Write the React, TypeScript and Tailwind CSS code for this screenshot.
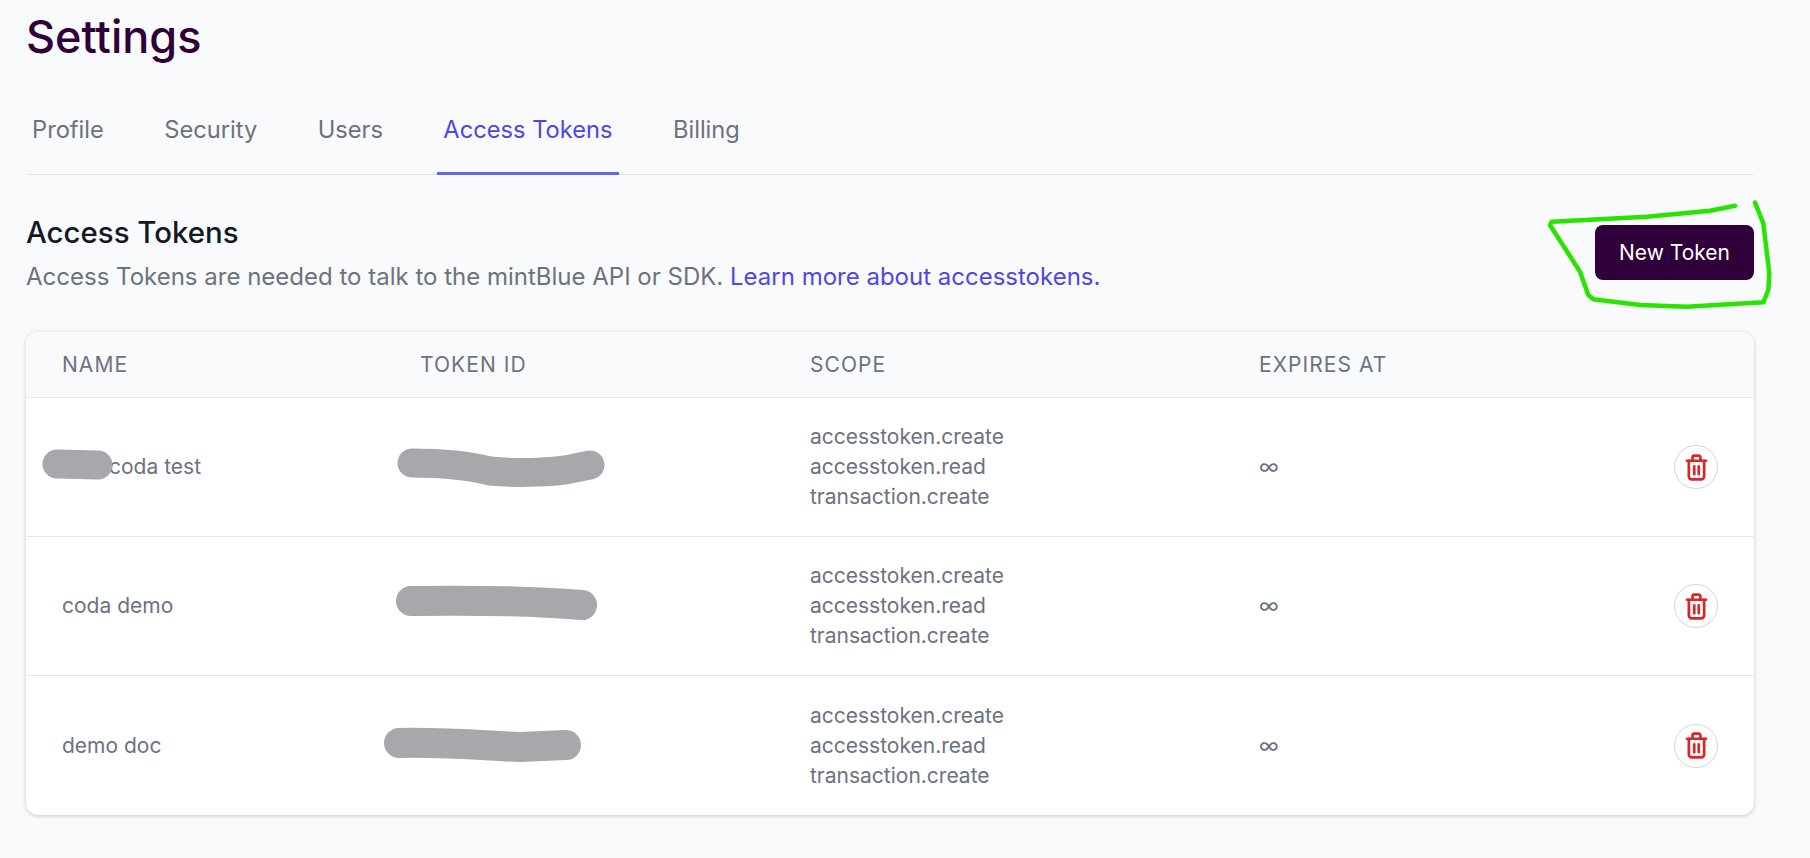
import React from "react";

const tabs = ["Profile", "Security", "Users", "Access Tokens", "Billing"];
const rows = ["coda test", "coda demo", "demo doc"];
const cols = "grid grid-cols-[358px_390px_449px_1fr_auto] items-center";

function Trash() {
  return (
    <svg width="27" height="27" viewBox="0 0 24 24" fill="none" stroke="#dc2626" strokeWidth="2.4" strokeLinecap="round" strokeLinejoin="round">
      <path d="M3.500 6h17" />
      <path d="M18.800 6v14a2.500 2.500 0 0 1-2.500 2.500H7.700a2.500 2.500 0 0 1-2.500-2.500V6" />
      <path d="M8.500 6V3a1.500 1.500 0 0 1 1.500-1.500h4A1.500 1.500 0 0 1 15.500 3v3" />
      <path d="M10 11v7" />
      <path d="M14 11v7" />
    </svg>
  );
}

function Scribbles() {
  return (
    <svg className="absolute left-0 top-0 pointer-events-none" width="1810" height="858" fill="none" strokeLinecap="round" strokeLinejoin="round">
      <path d="M57 464 L98 465" stroke="#a7a8ab" strokeWidth="29" />
      <path d="M412 463 C450 463 470 466 490 471 C520 474 560 472 575 468 L590 465" stroke="#a7a8ab" strokeWidth="29" />
      <path d="M411 601 C470 600 530 601 582 605" stroke="#a7a8ab" strokeWidth="30" />
      <path d="M399 743 C450 742 490 746 520 747 L566 745" stroke="#a7a8ab" strokeWidth="30" />
      <path d="M1735 205.700 L1710 210.700 L1646.700 216.700 L1551.700 221.700 L1550 225 L1580 271.700 L1588.300 295 L1593.300 299.300 L1640 305 L1686.700 306.700 L1763.300 302.300 L1768.300 290 L1769.300 273.300 L1763.300 223.300 L1755 202.700" stroke="#29e300" strokeWidth="4.500" />
    </svg>
  );
}

export default function App() {
  return (
    <div className="relative h-[858px] overflow-hidden bg-[#f9fafb] pl-[26px] pr-[56px] font-['Inter',sans-serif] text-[#6b7280]">
      <h1 className="pt-[8px] text-[45px] leading-[58px] font-medium text-[#2f0039]">Settings</h1>
      <div className="mt-[41px] flex h-[68px] gap-[48.3px] border-b border-[#e5e7eb]">
        {tabs.map((t) => (
          <div key={t} className={t === "Access Tokens" ? "h-[68px] border-b-[3px] border-[#6366f1] px-[6px] pt-[5px] text-[23.7px] leading-[36px] text-[#4f46e5]" : "h-[68px] border-b-[3px] border-transparent px-[6px] pt-[5px] text-[23.7px] leading-[36px]"}>
            {t}
          </div>
        ))}
      </div>
      <div className="mt-[38px] flex items-start justify-between">
        <div>
          <h2 className="text-[29.4px] leading-[40px] font-medium text-[#111827]">Access Tokens</h2>
          <p className="mt-[6px] text-[24px] leading-[36px]">
            Access Tokens are needed to talk to the mintBlue API or SDK. <span className="text-[#4f46e5]">Learn more about accesstokens.</span>
          </p>
        </div>
        <button className="mt-[12px] h-[55px] w-[159px] rounded-lg bg-[#2f0039] text-[21px] text-white">New Token</button>
      </div>
      <div className="mt-[37px] overflow-hidden rounded-xl bg-white shadow-[0_1px_4px_rgba(0,0,0,0.2)]">
        <div className={`${cols} h-[66px] border-b border-[#e5e7eb] bg-[#f9fafb] pl-[36px] text-[21px] tracking-wider`}>
          <div>NAME</div>
          <div>TOKEN ID</div>
          <div>SCOPE</div>
          <div>EXPIRES AT</div>
          <div />
        </div>
        {rows.map((r, i) => (
          <div key={r} className={`${cols} h-[139px] pl-[36px] text-[21px] leading-[30px] ${i < 2 ? "border-b border-[#e5e7eb]" : ""}`}>
            <div className={i === 0 ? "pl-[47px]" : ""}>{r}</div>
            <div />
            <div>
              <div>accesstoken.create</div>
              <div>accesstoken.read</div>
              <div>transaction.create</div>
            </div>
            <div>∞</div>
            <div className="pr-[36px]">
              <button className="flex h-[44px] w-[44px] items-center justify-center rounded-full border border-[#d1d5db] bg-white">
                <Trash />
              </button>
            </div>
          </div>
        ))}
      </div>
      <Scribbles />
    </div>
  );
}
